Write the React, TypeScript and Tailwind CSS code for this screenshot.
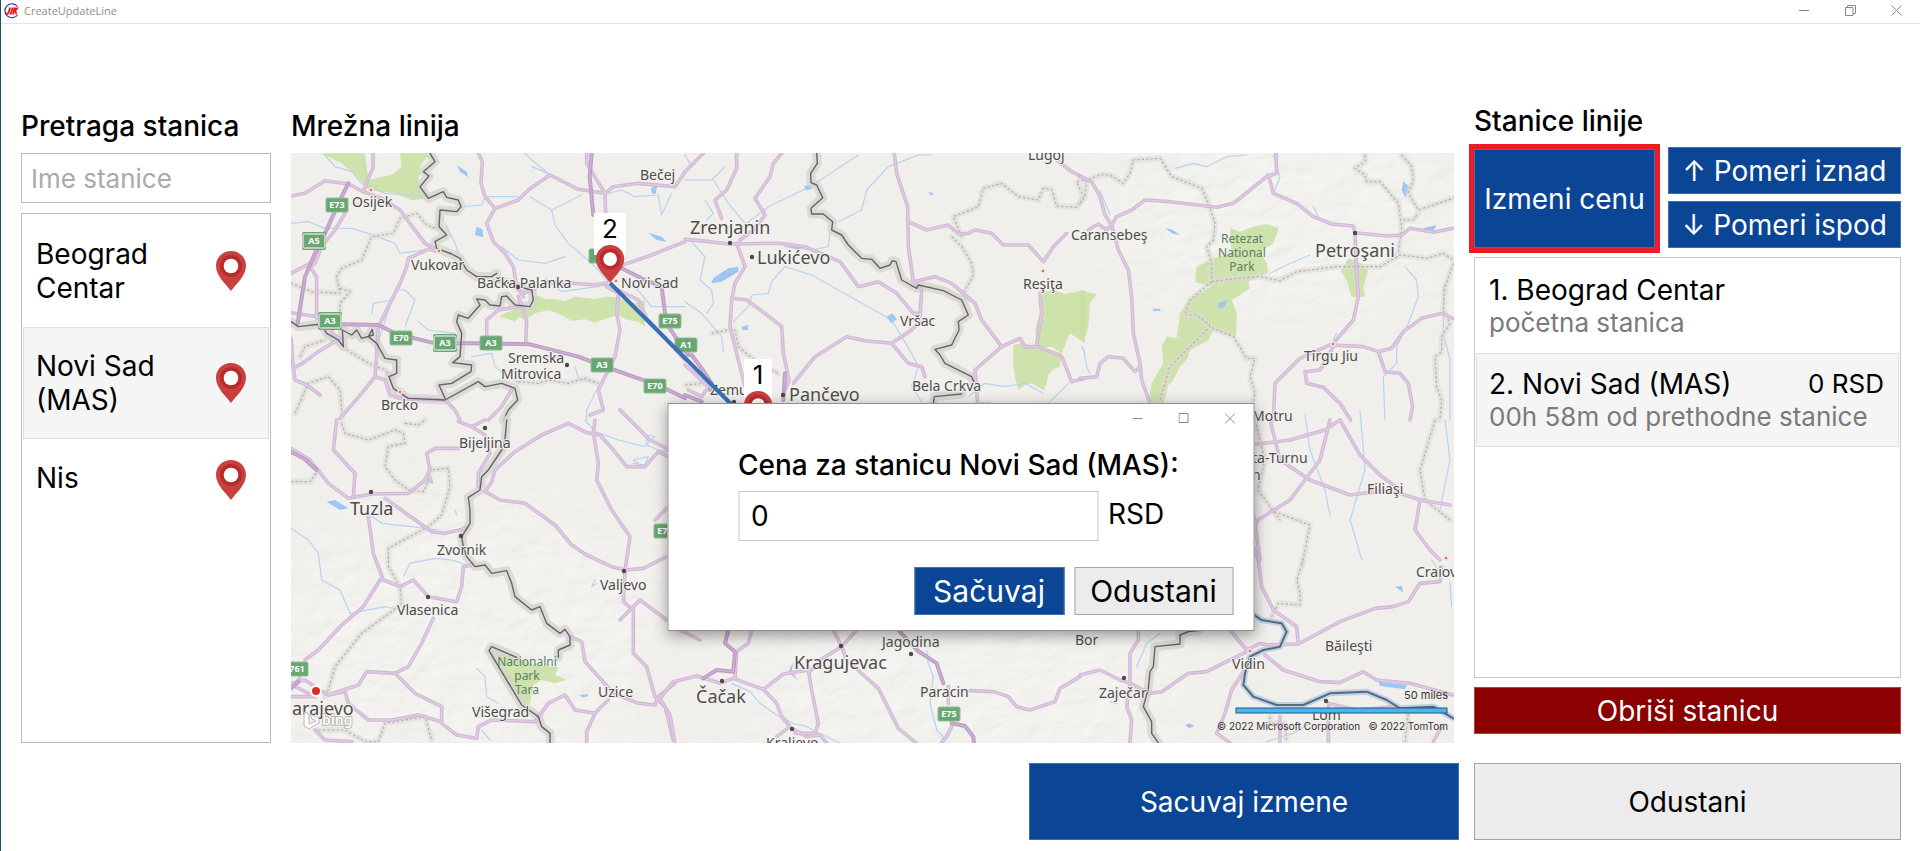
import React from "react";

type Tile = {
  x: number;
  y: number;
  scale: number;
  parks?: string[];
  water?: string[];
  lakes?: string[];
  dashed?: string[];
  roads?: string[];
  highways?: string[];
  borders?: string[];
  rivers?: string[];
};

const third = 1 / 3;

const tiles: Tile[] = [
  {
    x: 285, y: 100, scale: third,
    parks: [
      "110,160 240,160 250,240 320,225 350,200 345,160 432,160 405,200 400,250 440,295 380,300 330,280 250,270 225,240 170,190",
      "750,585 780,597 815,598 840,604 870,590 930,597 965,590 1000,592 1020,604 1050,610 1080,600 1078,640 1080,680 1060,665 1030,660 1000,645 965,655 930,668 900,658 860,662 830,645 790,630 750,640 720,660 700,652 690,665 665,655 640,650 670,635 700,625 745,620",
    ],
    water: [
      "120,165 150,200 200,215 230,250 300,280 360,285 405,290", "18,370 70,365 120,385 200,385 250,400 330,430 345,460 420,450",
      "735,290 800,330 810,375 850,430 920,490 970,545", "800,330 860,300 890,285", "540,320 590,315 600,290 700,290",
      "480,370 510,430 525,470", "650,440 700,480 780,490 840,470", "275,740 320,600 265,610 260,640", "400,665 430,690 510,700",
      "970,280 1010,270 1050,290 1120,285", "1120,285 1130,345 1150,300 1160,280", "1050,560 1100,620 1200,620", "780,535 830,575 900,565 970,555",
      "560,770 620,760 630,800 700,850", "940,860 905,930 905,960", "740,200 790,220 740,180 720,160", "360,680 390,600 360,570 330,570", "870,800 880,835 940,850",
    ],
    lakes: ["575,380 592,388 595,412 570,405", "1098,265 1118,250 1112,282 1100,280", "515,195 545,215 550,232 525,215", "1090,398 1130,410 1145,425 1115,420"],
    dashed: [
      "450,385 425,375 395,340 345,355 325,400 260,410 230,480 170,505 155,530 165,580 80,575 18,550", "165,565 195,575 165,610 165,635",
      "130,710 170,740 250,790 300,810 330,840", "30,940 70,850 130,830 165,870 172,950", "700,845 760,850 790,840 850,850 900,835 940,850", "45,770 60,740 120,720",
    ],
    roads: [
      "18,288 60,280 120,242 190,252 235,275 250,235 264,205 264,160", "235,275 290,295 345,330 420,430 465,455",
      "465,455 430,448 370,475 365,500 345,550 300,640 280,680 275,770 270,830 230,880 165,955", "180,340 150,390 110,440 90,490 75,500 95,530 95,655",
      "18,520 75,490", "18,638 100,650 130,665", "130,665 145,705 165,715 100,755 60,785 25,805 30,840 65,855 105,885", "18,715 25,805",
      "270,830 300,840 315,885 345,895", "345,895 480,900 510,930 525,960", "680,870 650,920 610,960",
      "580,160 592,185 588,250 600,290 630,325 605,370 625,425 660,460 685,500 695,560 715,590", "630,325 700,300 730,270 795,225 880,268 960,280",
      "905,160 905,190 960,280 962,345", "960,280 985,260 1060,250 1170,260 1200,215", "715,580 800,545 930,555 965,548", "1000,500 1100,465 1200,425",
      "965,560 1000,580 995,640 1005,690 990,770 970,810 940,870 955,930 915,945", "1000,570 1060,600 1085,655 1200,780", "605,725 605,660 640,630 700,620", "700,590 725,660 722,730",
    ],
    highways: ["190,250 165,300 120,400 90,460 60,530 38,670", "130,672 280,675 330,700 450,730 600,730 735,733 880,770 960,800 1060,835 1130,860 1200,895", "920,160 914,230 925,345", "1010,505 1080,540 1130,560 1140,640 1150,680 1210,765"],
    borders: [
      "435,160 450,185 415,215 432,228 405,260 430,295 475,275 485,292 520,300 528,320 515,335 465,330 462,380 485,405 450,425 455,445 500,462 525,475 545,510 575,530 620,530 635,520",
      "635,535 700,560 740,570 745,600 735,620 690,615 665,588 650,590 645,618 615,615 600,600 575,597 585,615 550,655 520,645 515,665 530,700 525,770 503,788 560,795 558,815 500,850 462,855 480,895",
      "18,665 40,680 110,672 125,700 160,720 175,740 172,690 200,705 215,690 230,715 265,705 262,688 250,710 275,730 300,775 335,780 335,820 312,830 325,865 370,895 480,900 580,845 600,860 650,850 690,865 698,900 670,930 655,960",
    ],
  },
  {
    x: 685, y: 100, scale: third,
    parks: ["1075,575 1110,572 1140,582 1200,570 1200,730 1155,700 1140,735 1130,760 1100,740 1060,745 1050,690 1065,640", "985,735 1015,728 1050,745 1090,748 1130,760 1125,800 1105,808 1090,825 1085,850 1075,870 1040,850 1020,855 1000,870 992,840 985,800", "885,905 920,905 910,912 885,912"],
    water: [
      "185,370 250,320 375,260 520,165", "460,365 500,345 530,330 545,270 610,200 700,165 740,165", "20,425 60,470 45,540 80,570 85,610 65,640", "0,605 50,640 110,710 115,755",
      "80,545 120,515 160,510", "200,585 250,580 260,545 300,500", "300,500 380,525 620,660 680,760 700,800", "300,440 380,450 430,440 435,395", "145,665 190,620 200,590", "0,240 80,240 120,200",
      "85,240 130,310 180,370", "700,800 680,860 710,905", "850,890 900,850 960,860 1020,850 1075,880", "1090,910 1150,850", "1190,740 1200,760", "20,200 0,165", "65,360 85,340 60,300",
    ],
    lakes: ["605,650 622,640 636,658 618,670", "358,258 390,252 380,268 362,270", "130,505 160,500 160,515 110,545 80,550 85,535", "170,680 190,675 188,690 172,690", "310,440 345,435 340,450", "730,275 745,280 740,288"],
    dashed: ["850,600 835,580 865,525 860,490 830,440 800,410", "830,410 805,350 880,320 895,265 950,250 1000,290 1060,300 1075,265 1100,268 1115,318 1175,322 1195,290 1175,245 1200,240", "80,700 130,690 150,690 160,740 220,790 280,820", "0,855 60,850"],
    roads: [
      "0,215 55,160", "155,160 155,205 125,270 90,300 110,355", "290,160 265,190 255,230 210,295 240,345 205,390 165,420", "0,418 75,425 130,432 280,430 360,440 430,470 465,485 520,560 580,545 635,580 685,640 705,640",
      "155,430 180,500 150,550 140,600 135,680 165,800 180,860", "140,595 185,600 240,640 290,680 295,760 312,840 300,870", "325,850 390,770 485,710 540,722 620,730 680,690 710,660",
      "620,730 670,790 710,800 720,830", "628,160 635,220 668,320 670,440 685,545 710,570 705,650", "670,365 725,390 790,375 820,402 850,400 870,390 920,400 955,435 1030,435 1075,485 1105,440 1145,400",
      "685,545 750,530 800,550 870,610 890,660 950,740 870,810 878,910", "950,740 1005,715 1020,740 1060,740 1130,770 1160,845 1200,835", "1065,580 1070,640 1055,735", "1115,180 1160,215 1200,235", "10,870 50,890 70,860 0,795",
    ],
    highways: ["20,765 50,805 80,850 75,870", "0,885 50,905", "300,820 295,900"],
    borders: ["395,160 397,190 377,220 378,248 395,255 413,293 378,325 380,342 415,342 443,365 440,390 470,405 490,435 530,475 560,478 585,505 615,495 622,482 633,485 650,540 695,565 700,555 775,572 830,600 850,645 820,665 822,690 800,735 750,748 765,765 780,790 860,830 868,850", "745,912 748,890 830,882"],
  },
  {
    x: 1080, y: 100, scale: third,
    parks: [
      "450,385 480,395 520,380 560,372 595,385 590,405 580,430 540,455 560,490 565,520 530,530 505,545 510,565 480,585 455,600 470,640 468,710 430,700 400,690 385,720 360,735 330,750 320,780 300,800 280,840 265,855 250,910 205,905 215,850 250,790 245,740 260,710 290,715 300,640 330,595 395,560 345,545 350,500 400,475 455,460",
      "805,475 835,485 865,510 850,560 855,590 815,590 800,540 782,515", "0,572 50,582 30,610 25,680 15,710 0,705",
    ],
    water: ["285,205 340,190 380,200 440,170 500,165", "580,165 600,230 585,270", "975,500 1010,540 1015,590 985,670 950,740 950,790 910,830 915,960", "1090,560 1090,700 1110,780 1110,960", "570,520 620,495 690,465", "60,270 90,345", "970,245 985,275 975,290", "760,720 770,700", "10,745 20,800 30,820", "700,320 715,350"],
    lakes: ["970,245 990,260 975,290 965,270", "1030,385 1070,375 1060,392 1040,392", "255,385 275,388 300,405 280,402", "415,608 445,600 430,625 415,625", "218,626 243,627 240,633 220,632"],
    dashed: [
      "0,310 15,290 20,240 60,225 90,225 130,250 150,220 160,180 240,175 275,230 365,265 385,310 405,370 400,420 380,440 395,490 395,540", "395,545 470,535 540,530 600,542 650,515 770,500 900,500 960,465 1040,475 1090,460 1120,480",
      "855,165 855,185 825,205 855,225 860,245 900,245 955,310 965,380 955,460", "965,165 995,200 1000,240 985,280 1015,330 1120,295", "970,360 1000,360 1015,340", "315,645 350,645 400,685 460,710 500,775 525,775 510,830 525,880 520,910",
      "240,900 270,800 330,740 390,680", "395,545 330,600 315,640", "1120,490 1095,560 1090,630 1110,670 1085,710 1085,755 1065,770 1070,860 1085,900 1080,960",
    ],
    roads: [
      "0,230 35,245 60,290 75,345 95,375 115,450 145,510 155,590 160,700 180,790 185,840 210,910", "95,375 110,350 155,330 195,300 270,305 410,322 460,310 510,270 560,230 590,220 588,160",
      "565,225 580,280 650,310 700,350 755,372 820,378 825,398 920,408 965,405 990,385 1060,397 1118,385", "825,400 830,520 835,590 820,660 760,730", "760,730 660,775 585,850 580,960",
      "760,735 850,740 895,755 935,745 970,695 1025,655 1088,640 1118,655", "895,755 915,815 960,820 985,850 998,920 990,960", "760,740 720,810 675,815 680,850 730,862 780,910 812,960", "0,835 50,830 60,790 85,770 130,775 165,815 180,800", "25,390 55,372 80,390 95,375",
    ],
  },
  {
    x: 285, y: 420, scale: third,
    parks: ["615,680 690,712 760,738 820,740 810,765 845,780 810,790 770,780 745,795 735,850 715,855 690,820 620,720"],
    water: [
      "18,325 70,360 100,400 110,480 165,510 195,580 300,560 350,570", "255,285 290,310 380,320 460,330", "355,470 375,430 450,415 500,420 560,440", "900,0 930,35 1000,60 1080,80 1110,50 1085,45 1085,75 1120,90 1150,95", "1045,130 1080,135 1090,110 1045,120 1060,130",
      "575,745 600,770 605,830 640,850", "590,930 615,960", "1020,450 1080,445 1145,410", "930,480 920,500 935,490", "510,270 515,285",
    ],
    lakes: ["125,245 150,240 190,265 165,270", "430,170 440,170 445,190 425,190", "885,825 912,822 905,830 890,832"],
    dashed: [
      "170,10 180,40 250,60 330,30 355,40 360,70 310,80 300,140 330,180 370,210 415,215 430,180 435,150 490,145 495,200 470,285 430,320 310,385 310,440 345,500 350,550 320,575 230,640 150,740 130,810 120,830", "18,185 75,185 100,150 75,130",
      "100,930 180,930 240,965 280,965 300,910 420,890 440,960", "360,10 400,15 420,0",
    ],
    roads: [
      "155,0 145,90 210,160 205,230", "18,85 75,120 130,190 190,235 260,222 370,220 420,180 435,150 425,100 450,85 520,85", "300,235 370,285 440,335 480,340 545,325", "250,290 265,400 295,480 345,500 385,480 430,530 515,545 530,500 535,440 560,435",
      "285,480 235,560 165,620 100,690 60,720", "445,595 410,670 370,740 330,760 245,755 220,795 130,825 105,810 60,780 18,790", "330,760 390,820 470,860 470,910 515,945 575,955 580,920 620,900 750,905",
      "130,825 180,815 190,850 250,900 320,900 400,885 470,905", "18,830 90,830 30,800 45,770", "90,930 120,960 200,965", "520,5 560,20 600,0", "560,20 600,45 615,100 580,160 580,200",
      "850,10 770,45 690,95 630,150 620,185 600,215", "850,10 905,38 945,45 985,90 1025,140 1080,140 1120,95 1150,110", "930,0 925,38 940,130 935,180 980,270 1035,350 1020,450", "600,215 645,240 720,250 810,315 860,375 905,405 980,440 1020,450 1075,445 1145,410",
      "1020,455 1015,545 1045,570 1045,700 1085,740 1110,830 1140,860 1165,960", "855,650 890,665 900,725 950,780 985,820 1060,850 1110,855 1120,830 1170,790", "750,905 790,850 840,825 870,870 930,880 905,935 905,965", "930,880 970,840",
    ],
    highways: ["18,95 60,118 95,150", "18,805 40,785"],
    borders: [
      "665,0 660,60 650,90 610,150 590,170 585,210 550,232 555,270 555,310 530,350", "530,350 535,380 545,410 570,440 600,435 620,460 665,452 680,490 690,530 740,570 765,560 785,610 825,640 840,628 855,650 855,675 820,690 820,712",
      "695,712 655,695 620,680 612,692 650,755 710,855 760,890 770,920 795,940 795,970",
    ],
  },
  {
    x: 660, y: 600, scale: third,
    water: ["215,250 270,275 300,310 350,345 400,370 440,380 500,410 540,430", "800,150 805,190 820,230 810,310 830,390 850,410 840,430"],
    lakes: ["400,185 395,215 415,240 385,218"],
    roads: [
      "0,295 40,245 110,228 180,250 220,235 310,268 370,222 445,210 455,270 475,370 465,400 405,400", "225,235 230,155 265,130 275,90", "0,295 30,345 45,430", "310,268 350,310 365,350 390,380 350,410", "395,385 440,410 480,405 500,430",
      "545,140 480,180 450,215", "520,90 545,140 590,90", "545,140 560,180 610,225 655,265 715,385 770,430", "865,260 865,310", "930,272 1000,275 1045,290 1070,320 1110,330 1185,305 1200,265 1260,230", "880,370 860,410 845,430",
    ],
    highways: ["205,90 195,130 225,155 220,215 170,210 130,235", "715,90 770,150 830,190 850,250", "875,370 915,378 940,410 942,430"],
  },
  {
    x: 1080, y: 560, scale: third,
    water: ["170,320 200,250 240,220", "1055,0 1075,30", "1110,70 1115,140", "560,545 640,520 690,490", "90,425 110,430"],
    lakes: ["945,80 965,78 970,98", "895,365 980,375 975,388 900,378", "315,495 330,490 342,498 328,505"],
    dashed: ["670,0 650,60 660,100 660,135 595,130 570,180", "570,470 570,490 615,490 620,540", "985,460 975,545"],
    roads: [
      "0,345 60,330 120,360 150,370 210,400 245,395 325,340 380,335 440,305 500,275", "175,210 175,240 150,280 150,370 140,440 155,480 150,545", "450,210 500,270 540,250 560,255 655,252 650,200 580,150 545,80 535,0",
      "655,252 780,185 885,145 940,140 985,125 1020,70 1080,65 1085,20", "555,285 610,330 720,365 780,368 850,335 890,360 990,370 1118,405", "490,335 455,390 435,460 410,520 450,548", "600,470 600,548", "745,440 745,548", "745,430 830,450 950,440", "1085,500 1060,545",
    ],
    rivers: ["515,160 545,180 605,190 620,215 600,260 550,270 510,290 495,340 490,375 520,410 590,435 670,435 750,400 860,395 920,420 960,445 1060,440 1120,475"],
    borders: ["355,212 325,215 300,225 300,252 225,260 220,320 210,335 205,385 190,440 215,485 215,520 235,548"],
  },
  {
    x: 1250, y: 400, scale: 1,
    water: ["55,15 60,50 75,90 80,115", "110,10 115,70 100,120 112,160", "195,20 200,60 190,110"],
    dashed: ["5,20 15,60 8,90 30,120", "20,110 60,125 52,165", "185,20 170,70 175,100 200,120"],
    roads: ["0,45 40,40 75,30 90,20", "20,20 30,60 60,80 100,95 140,90 170,100 200,105", "90,20 110,55 130,75 150,90", "80,20 70,60 40,100 8,120 0,135 8,160", "170,100 165,130 180,150 190,160", "3,110 10,160"],
  },
  {
    x: 620, y: 400, scale: 1,
    roads: ["0,10 30,40 50,50", "35,120 50,105", "0,220 20,200 60,230 80,240"],
  },
];

type LineProps = { lines?: string[]; color: string; width: number; dash?: string; opacity?: number };

function Lines({ lines = [], color, width, dash, opacity }: LineProps) {
  return (
    <g fill="none" stroke={color} strokeWidth={width} strokeDasharray={dash} strokeLinejoin="round" strokeLinecap={dash ? "butt" : "round"} opacity={opacity}>
      {lines.map((points) => (
        <polyline key={points} points={points} />
      ))}
    </g>
  );
}

function MapTile({ tile }: { tile: Tile }) {
  const u = 1 / tile.scale;
  return (
    <g transform={`translate(${tile.x} ${tile.y}) scale(${tile.scale})`}>
      {(tile.parks ?? []).map((p) => (
        <polygon key={p} points={p} fill="#c8dfa0" opacity={0.85} />
      ))}
      <Lines lines={tile.water} color="#b7d3ef" width={1.2 * u} />
      {(tile.lakes ?? []).map((p) => (
        <polygon key={p} points={p} fill="#9fc6f2" />
      ))}
      <Lines lines={tile.dashed} color="#dddcd7" width={6 * u} opacity={0.6} />
      <Lines lines={tile.dashed} color="#b5b2ad" width={1.2 * u} dash={`${2.5 * u} ${2 * u}`} />
      <Lines lines={tile.borders} color="#d6d5d0" width={9 * u} opacity={0.8} />
      <Lines lines={tile.rivers} color="#a8c6e4" width={6 * u} opacity={0.7} />
      <Lines lines={tile.roads} color="#d3b6d8" width={3.6 * u} />
      <Lines lines={tile.roads} color="#decde0" width={1.4 * u} />
      <Lines lines={tile.highways} color="#bd9dc4" width={4 * u} />
      <Lines lines={tile.highways} color="#cdb0d2" width={1.4 * u} />
      <Lines lines={tile.borders} color="#64636a" width={1.4 * u} />
      <Lines lines={tile.rivers} color="#59697c" width={2 * u} />
    </g>
  );
}

const towns: [string, number, number][] = [
  ["Osijek", 352, 207], ["Vukovar", 411, 270], ["Bačka Palanka", 477, 288], ["Novi Sad", 621, 288], ["Bečej", 640, 180],
  ["Sremska", 508, 363], ["Mitrovica", 501, 379], ["Brcko", 381, 410], ["Reşiţa", 1023, 289], ["Vršac", 900, 326],
  ["Bela Crkva", 912, 391], ["Zemun", 710, 395], ["Lugoj", 1028, 160], ["Caransebeş", 1071, 240], ["Tîrgu Jiu", 1304, 361],
  ["Motru", 1252, 421], ["ta-Turnu", 1252, 463], ["n", 1252, 480], ["Filiaşi", 1367, 494], ["Bijeljina", 459, 448],
  ["Zvornik", 437, 555], ["Vlasenica", 397, 615], ["Valjevo", 600, 590], ["Uzice", 598, 697], ["Višegrad", 472, 717],
  ["Jagodina", 882, 647], ["Paracin", 920, 697], ["Kraljevo", 766, 748], ["Bor", 1075, 645], ["Zaječar", 1099, 698],
  ["Vidin", 1232, 669], ["Băileşti", 1325, 651], ["Lom", 1312, 720], ["Craiova", 1416, 577],
];

const cities: [string, number, number][] = [
  ["Zrenjanin", 690, 234], ["Lukićevo", 757, 264], ["Pančevo", 789, 401], ["Petroşani", 1315, 257], ["Tuzla", 350, 515],
  ["arajevo", 292, 715], ["Čačak", 696, 703], ["Kragujevac", 794, 669],
];

const parkNames: [string, number, number][] = [
  ["Retezat", 1242, 243], ["National", 1242, 257], ["Park", 1242, 271], ["Nacionalni", 527, 666], ["park", 527, 680], ["Tara", 527, 694],
];

const shields: [string, number, number, boolean][] = [
  ["", 600, 256, false], ["E73", 337, 205, false], ["A5", 314, 241, true], ["A3", 330, 321, true], ["E70", 401, 338, false], ["A3", 445, 343, true],
  ["A3", 491, 343, false], ["A3", 602, 365, false], ["E70", 655, 386, false], ["E75", 670, 321, false], ["A1", 686, 345, false],
  ["E75", 665, 531, false], ["761", 297, 669, false], ["E75", 949, 714, false],
];

const dots: [number, number][] = [
  [730, 243], [752, 257], [783, 395], [567, 365], [518, 287], [485, 428], [371, 492], [461, 536], [428, 597], [624, 571],
  [722, 681], [841, 646], [911, 654], [792, 729], [1124, 678], [1326, 701], [1355, 233], [734, 402],
];

const redDots: [number, number][] = [[371, 190], [439, 251], [616, 281], [400, 392], [1043, 271], [1333, 344], [1250, 651], [1446, 558]];

function PinShape() {
  return (
    <>
      <path d="M15 0C6.600 0 0 6.600 0 14.800C0 25 9 32 15 40C21 32 30 25 30 14.800C30 6.600 23.400 0 15 0Z" fill="#c8413f" />
      <circle cx="15" cy="15" r="11" fill="#b72b2c" />
      <circle cx="15" cy="15" r="7.300" fill="#fff" />
    </>
  );
}

function Pin() {
  return (
    <svg viewBox="0 0 30 40" className="h-10 w-[30px] shrink-0 self-center" aria-hidden="true">
      <PinShape />
    </svg>
  );
}

function NetworkMap() {
  return (
    <svg viewBox="291 153 1163 590" preserveAspectRatio="xMidYMid slice" className="absolute inset-0 h-full w-full" role="img" aria-label="Mrežna linija">
      <defs>
        <filter id="relief" x="0" y="0" width="1" height="1">
          <feTurbulence type="fractalNoise" baseFrequency="0.035 0.06" numOctaves="3" seed="4" />
          <feDiffuseLighting surfaceScale="2.200" diffuseConstant="1.050" lightingColor="#fdfcf9">
            <feDistantLight azimuth="225" elevation="65" />
          </feDiffuseLighting>
        </filter>
        <radialGradient id="hills">
          <stop offset="0.500" stopColor="#fff" />
          <stop offset="1" stopColor="#000" />
        </radialGradient>
        <mask id="uplands">
          <ellipse cx="1290" cy="210" rx="260" ry="170" fill="url(#hills)" />
          <ellipse cx="480" cy="640" rx="330" ry="200" fill="url(#hills)" />
          <ellipse cx="960" cy="690" rx="330" ry="140" fill="url(#hills)" />
        </mask>
      </defs>
      <rect x="291" y="153" width="1163" height="590" fill="#f0efeb" />
      <g mask="url(#uplands)">
        <rect x="291" y="153" width="1163" height="590" filter="url(#relief)" opacity="0.300" />
      </g>
      {tiles.map((tile) => (
        <MapTile key={`${tile.x}-${tile.y}`} tile={tile} />
      ))}
      {dots.map(([x, y]) => (
        <circle key={`${x}-${y}`} cx={x} cy={y} r="2.200" fill="#4a4a4a" />
      ))}
      {redDots.map(([x, y]) => (
        <circle key={`${x}-${y}`} cx={x} cy={y} r="2" fill="#e0705a" stroke="#f9e3d8" strokeWidth="1.500" />
      ))}
      <circle cx="316" cy="691" r="5" fill="#d9302a" stroke="#fff" strokeWidth="2" />
      {shields.map(([name, x, y, double]) => (
        <g key={`${name}-${x}`}>
          {double && <rect x={x - 12} y={y - 9} width="24" height="18" rx="2" fill="#69a673" />}
          <rect x={x - 11} y={y - 7} width="22" height="14" rx="1.500" fill="#69a673" stroke={double ? "#fff" : "#8fbd96"} strokeWidth="1" />
          <text x={x} y={y + 3} textAnchor="middle" fontSize="9" fontWeight="700" fill="#fff">{name}</text>
        </g>
      ))}
      <g fill="#4d4d4d" stroke="#f3f2ee" strokeWidth="2" paintOrder="stroke" strokeLinejoin="round">
        {towns.map(([name, x, y]) => (
          <text key={`${name}-${x}`} x={x} y={y} fontSize="14">{name}</text>
        ))}
        {cities.map(([name, x, y]) => (
          <text key={name} x={x} y={y} fontSize="18">{name}</text>
        ))}
      </g>
      <g fill="#5b8068" textAnchor="middle">
        {parkNames.map(([name, x, y]) => (
          <text key={name} x={x} y={y} fontSize="12">{name}</text>
        ))}
      </g>
      <g opacity="0.900">
        <path d="M304 712l5 2v10l7-3-4-2-2-5 9 4v5l-10 6-5-3z" fill="#fff" stroke="#b5b4b0" strokeWidth="1" />
        <text x="322" y="725" fontSize="14" fontWeight="600" fill="#fff" stroke="#b5b4b0" strokeWidth="2" paintOrder="stroke">bing</text>
      </g>
      <line x1="610" y1="283" x2="758" y2="431" stroke="#3c70b4" strokeWidth="4" />
      <g fontSize="26" textAnchor="middle" className="font-['Inter',sans-serif]">
        <rect x="594" y="213" width="32" height="42" fill="#fff" />
        <text x="610" y="238">2</text>
        <g transform="translate(596 245) scale(.94)"><PinShape /></g>
        <rect x="744" y="359" width="28" height="42" fill="#fff" />
        <text x="758" y="384">1</text>
        <g transform="translate(744 391) scale(.94)"><PinShape /></g>
      </g>
      <g className="font-['Inter',sans-serif]" fill="#333" fontSize="10">
        <text x="1448" y="699" textAnchor="end" fontSize="11">50 miles</text>
        <rect x="1236" y="708" width="211" height="5" fill="#44b7f8" stroke="#33566f" strokeWidth="1" />
        <text x="1217" y="730">© 2022 Microsoft Corporation</text>
        <text x="1448" y="730" textAnchor="end">© 2022 TomTom</text>
      </g>
    </svg>
  );
}

function Logo() {
  return (
    <svg viewBox="0 0 16 16" className="h-4 w-4" aria-hidden="true">
      <path d="M14.500 3.500A7 7 0 1 0 14.500 12" fill="none" stroke="#2b2fa0" strokeWidth="1.200" />
      <path d="M2.500 11.500h3L8.200 4.500H6.200L4.500 9.800H3.200zM6.300 11.500h2L11 4.500H9zM9 11.500h2l.8-3 .8 3h1.600l-.9-3.800L16 4.500h-5z" fill="#f3141b" />
    </svg>
  );
}

function WindowControls({ restore = false }: { restore?: boolean }) {
  return (
    <div className="flex items-center gap-[35px] text-[#8a8a8a]">
      <button type="button" aria-label="Minimize">
        <svg viewBox="0 0 11 11" className="size-[11px]" fill="none" stroke="currentColor"><path d="M0 5.500h10" /></svg>
      </button>
      <button type="button" aria-label={restore ? "Restore" : "Maximize"}>
        <svg viewBox="0 0 11 11" className="size-[11px]" fill="none" stroke="currentColor">
          {restore ? <path d="M.5 2.500h7.500v8H.5zM2.500 2.500V.5h8v8H8" /> : <path d="M.5.500h9v9h-9z" />}
        </svg>
      </button>
      <button type="button" aria-label="Close">
        <svg viewBox="0 0 11 11" className="size-[11px]" fill="none" stroke="currentColor"><path d="M.5.500l10 10M10.500.500l-10 10" /></svg>
      </button>
    </div>
  );
}

const blueButton = "border border-[#3f6fae] bg-[#0b4596] text-white";
const greyButton = "border border-[#a3a3a3] bg-[#ececec]";

const stations = ["Beograd Centar", "Novi Sad (MAS)", "Nis"];

export default function App() {
  return (
    <div className="relative flex min-h-screen flex-col border-l border-[#1f4e5f] bg-white font-['Inter',sans-serif] text-[28px] leading-[34px] text-black">
      <header className="flex h-6 items-center justify-between border-b border-[#e5e5e5] pr-[18px] pb-0.5 pl-0.5">
        <div className="flex items-center gap-[5px]">
          <Logo />
          <span className="font-['Open_Sans',sans-serif] text-[11px] leading-4 text-[#8f8f8f]">CreateUpdateLine</span>
        </div>
        <WindowControls restore />
      </header>

      <main className="flex flex-1 gap-5 pt-[85px] pr-[19px] pl-5">
        <section className="flex w-[250px] shrink-0 flex-col">
          <label htmlFor="search" className="mb-2.5 font-medium">Pretraga stanica</label>
          <input id="search" placeholder="Ime stanice" className="h-[50px] border border-[#b9bbc0] px-[9px] text-[26px] outline-none placeholder:text-[#aaa]" />
          <ul className="mt-2.5 flex-1 border border-[#b9bbc0] p-px">
            {stations.map((name) => (
              <li
                key={name}
                className={`flex items-start justify-between gap-8 border py-5 pr-[22px] pl-3 ${name === "Novi Sad (MAS)" ? "border-[#dedede] bg-[#f5f5f5]" : "border-transparent"}`}
              >
                <span className="py-px">{name}</span>
                <Pin />
              </li>
            ))}
          </ul>
        </section>

        <section className="flex min-w-0 flex-1 flex-col">
          <h2 className="mb-2.5 font-medium">Mrežna linija</h2>
          <div className="relative flex-1 overflow-hidden font-['Noto_Sans',sans-serif]">
            <NetworkMap />
          </div>
        </section>

        <section className="-mt-[5px] flex w-[427px] shrink-0 flex-col">
          <h2 className="font-medium">Stanice linije</h2>
          <div className="mt-[9px] flex gap-[13px]">
            <button type="button" className={`mt-0.5 h-[99px] w-[181px] outline-[5px] outline-[#ee1c24] outline-solid ${blueButton}`}>Izmeni cenu</button>
            <div className="flex flex-1 flex-col gap-[7px]">
              <button type="button" className={`flex-1 ${blueButton}`}>↑ Pomeri iznad</button>
              <button type="button" className={`flex-1 ${blueButton}`}>↓ Pomeri ispod</button>
            </div>
          </div>
          <ul className="mt-[9px] flex-1 border border-[#c6c8cb] p-px">
            <li className="border border-transparent px-3 py-[13px]">
              <p>1. Beograd Centar</p>
              <p className="text-[26px] leading-8 text-[#7a7a7a]">početna stanica</p>
            </li>
            <li className="border border-[#dedede] bg-[#f5f5f5] py-[13px] pr-[14px] pl-3">
              <div className="flex justify-between">
                <p>2. Novi Sad (MAS)</p>
                <p className="text-[26px]">0 RSD</p>
              </div>
              <p className="text-[26px] leading-8 text-[#7a7a7a]">00h 58m od prethodne stanice</p>
            </li>
          </ul>
          <button type="button" className="mt-[9px] mb-[9px] h-[47px] border border-[#ad4444] bg-[#8b0000] text-white">Obriši stanicu</button>
        </section>
      </main>

      <footer className="flex justify-end gap-[15px] pt-5 pr-[19px] pb-[11px]">
        <button type="button" className={`h-[77px] w-[430px] ${blueButton}`}>Sacuvaj izmene</button>
        <button type="button" className={`h-[77px] w-[427px] ${greyButton}`}>Odustani</button>
      </footer>

      <div role="dialog" aria-labelledby="price-title" className="absolute top-[403px] left-1/2 w-[587px] -translate-x-1/2 border border-[#8f8f8f] bg-white pb-[15px] shadow-[0_4px_14px_rgba(0,0,0,0.4)]">
        <div className="flex h-[29px] items-center justify-end pr-[18px]">
          <WindowControls />
        </div>
        <div className="pt-[15px] pr-5 pl-[70px]">
          <label id="price-title" htmlFor="price" className="block font-medium">Cena za stanicu Novi Sad (MAS):</label>
          <div className="mt-[9px] flex gap-2.5">
            <input id="price" defaultValue="0" className="h-[50px] w-[360px] border border-[#c6c8cb] px-3 outline-none" />
            <span className="pt-1.5">RSD</span>
          </div>
          <div className="mt-[26px] flex justify-end gap-2.5 text-[30px]">
            <button type="button" className={`h-12 w-[150px] ${blueButton}`}>Sačuvaj</button>
            <button type="button" className={`h-12 w-[159px] ${greyButton}`}>Odustani</button>
          </div>
        </div>
      </div>
    </div>
  );
}
